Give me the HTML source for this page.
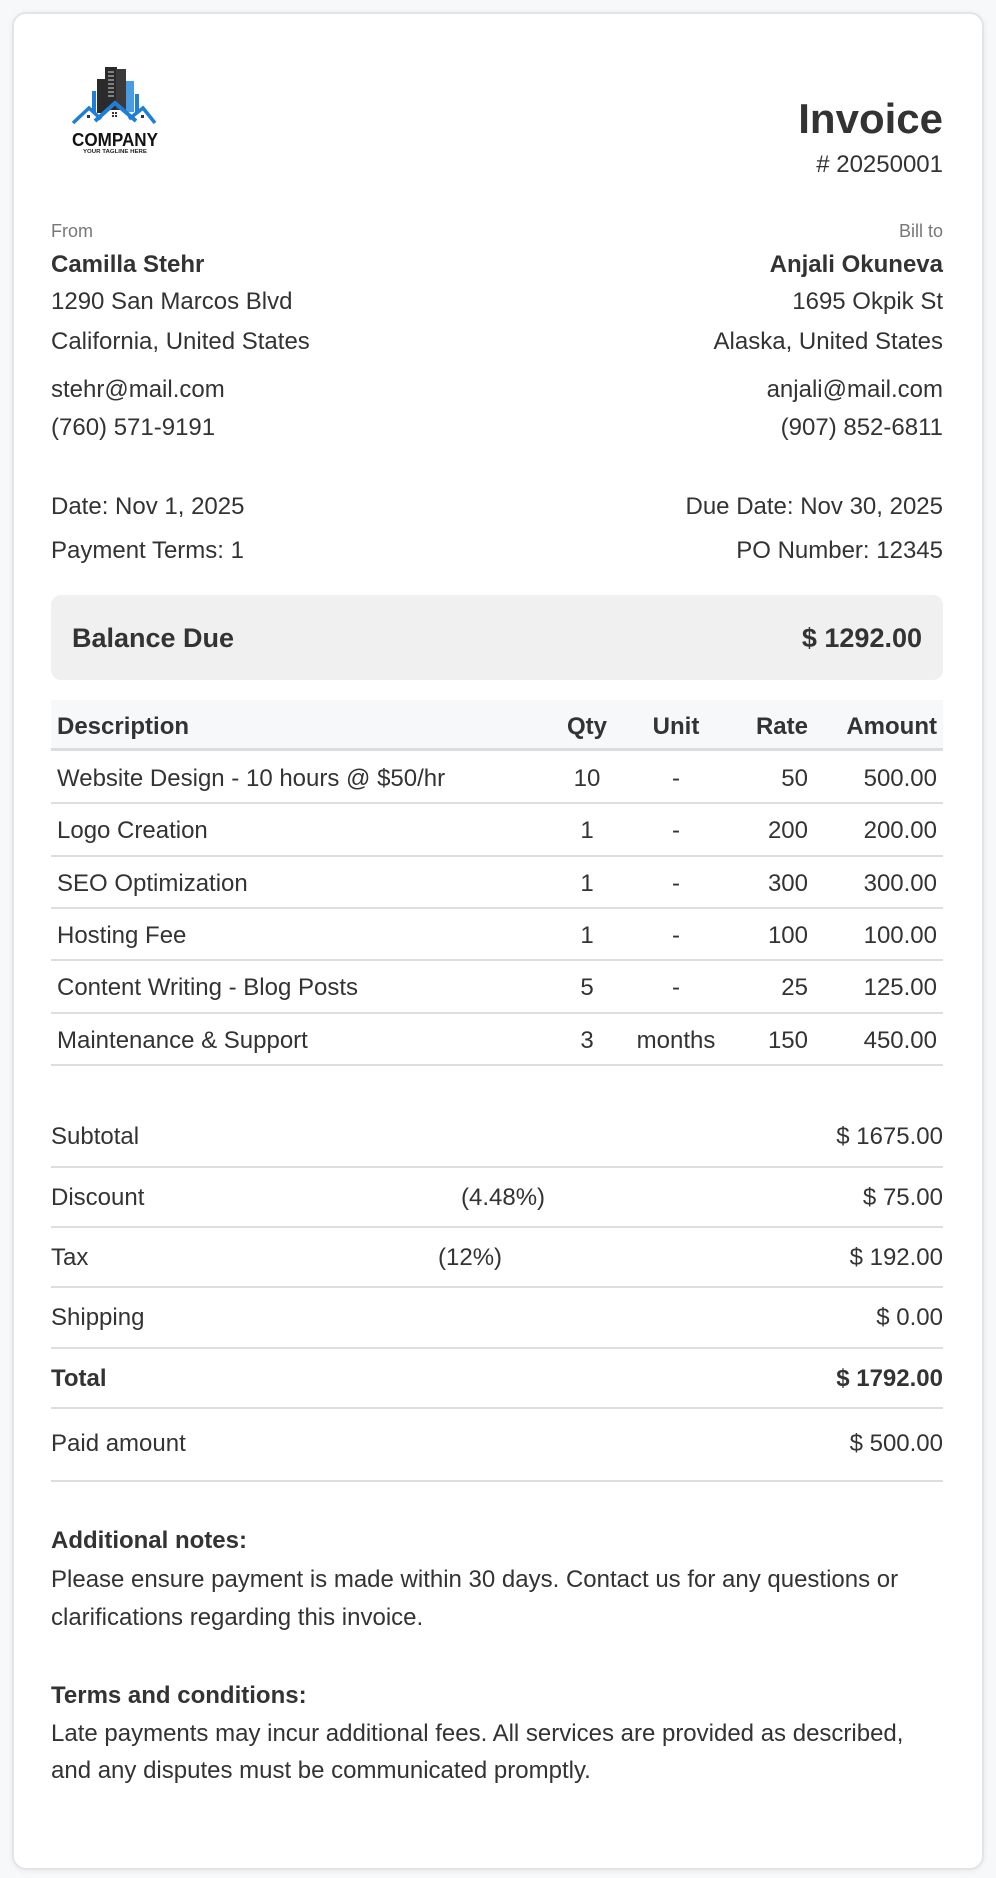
<!DOCTYPE html>
<html><head><meta charset="utf-8"><style>
*{margin:0;padding:0;box-sizing:border-box}
body{width:996px;height:1878px;background:#f7f8f9;font-family:"Liberation Sans",Arial,sans-serif;color:#333;position:relative;overflow:hidden}
.card{position:absolute;left:12px;top:12px;width:972px;height:1858px;background:#fff;border:2px solid #e2e4e7;border-radius:14px;box-shadow:0 1px 6px rgba(0,0,0,.06)}
.t{position:absolute;font-size:24px;line-height:30px;white-space:nowrap;transform:translateY(2px)}
.nb{transform:none}
.l{left:51px}.r{right:53px;text-align:right}
.b{font-weight:bold}
.lab{font-size:18px;color:#777}
.line{position:absolute;left:51px;width:892px;height:2px;background:#dedede}
</style></head><body>
<div class="card"></div>

<svg style="position:absolute;left:50px;top:50px" width="130" height="110" viewBox="0 0 130 110">
  <rect x="42" y="41" width="4" height="22" fill="#1f7ed6"/>
  <rect x="47" y="29" width="9" height="34" fill="#2b2b2b"/>
  <rect x="55" y="17" width="12" height="43" fill="#2b2b2b"/>
  <g stroke="#fff" stroke-width="0.8"><line x1="58" y1="22" x2="64" y2="22"/><line x1="58" y1="26" x2="64" y2="26"/><line x1="58" y1="30" x2="64" y2="30"/><line x1="58" y1="34" x2="64" y2="34"/><line x1="58" y1="38" x2="64" y2="38"/><line x1="58" y1="42" x2="64" y2="42"/><line x1="58" y1="46" x2="64" y2="46"/></g>
  <rect x="66" y="19" width="10" height="41" fill="#3a3a3a"/>
  <rect x="76" y="31" width="8" height="31" fill="#4a9be0"/>
  <rect x="85" y="44" width="4" height="19" fill="#1f7ed6"/>
  <polyline points="23,73 39,58 51,69" fill="none" stroke="#1f7ed6" stroke-width="3.5"/>
  <polyline points="45,71 65,53 86,71" fill="none" stroke="#1f7ed6" stroke-width="4"/>
  <polyline points="79,69 93,58 105,73" fill="none" stroke="#1f7ed6" stroke-width="3.5"/>
  <rect x="62" y="62" width="2" height="2" fill="#333"/><rect x="65" y="62" width="2" height="2" fill="#333"/><rect x="62" y="65" width="2" height="2" fill="#333"/><rect x="65" y="65" width="2" height="2" fill="#333"/>
  <rect x="37" y="65" width="3" height="3" fill="#333"/><rect x="91" y="65" width="3" height="3" fill="#333"/>
  <text x="65" y="96" text-anchor="middle" font-family="Liberation Sans, sans-serif" font-weight="bold" font-size="18" fill="#111" textLength="86" lengthAdjust="spacingAndGlyphs">COMPANY</text>
  <text x="65" y="103" text-anchor="middle" font-family="Liberation Sans, sans-serif" font-weight="bold" font-size="5" fill="#222" textLength="64" lengthAdjust="spacingAndGlyphs">YOUR TAGLINE HERE</text>
</svg>

<div class="t r b" style="top:92px;font-size:42px;line-height:50px">Invoice</div>
<div class="t r" style="top:148px">#&nbsp;20250001</div>

<div class="t l lab" style="top:216px;line-height:26px">From</div>
<div class="t r lab" style="top:216px;line-height:26px">Bill to</div>
<div class="t l b" style="top:248px">Camilla Stehr</div>
<div class="t r b" style="top:248px">Anjali Okuneva</div>
<div class="t l" style="top:285px">1290 San Marcos Blvd</div>
<div class="t r" style="top:285px">1695 Okpik St</div>
<div class="t l" style="top:325px">California, United States</div>
<div class="t r" style="top:325px">Alaska, United States</div>
<div class="t l" style="top:373px">stehr@mail.com</div>
<div class="t r" style="top:373px">anjali@mail.com</div>
<div class="t l" style="top:411px">(760) 571-9191</div>
<div class="t r" style="top:411px">(907) 852-6811</div>

<div class="t l" style="top:490px">Date: Nov 1, 2025</div>
<div class="t r" style="top:490px">Due Date: Nov 30, 2025</div>
<div class="t l" style="top:534px">Payment Terms: 1</div>
<div class="t r" style="top:534px">PO Number: 12345</div>

<div style="position:absolute;left:51px;top:595px;width:892px;height:85px;background:#f0f0f0;border-radius:10px"></div>
<div class="t b nb" style="left:72px;top:622px;font-size:27px;line-height:32px">Balance Due</div>
<div class="t b nb" style="right:74px;top:622px;font-size:27px;line-height:32px">$ 1292.00</div>

<div style="position:absolute;left:51px;top:700px;width:892px;height:51px;background:#f7f8fa;border-bottom:3px solid #dcdcdc"></div>
<div class="t b" style="left:57px;top:710px">Description</div>
<div class="t b" style="left:547px;width:80px;text-align:center;top:710px">Qty</div>
<div class="t b" style="left:636px;width:80px;text-align:center;top:710px">Unit</div>
<div class="t b" style="right:188px;top:710px">Rate</div>
<div class="t b" style="right:59px;top:710px">Amount</div>

<div style="position:absolute;left:0;top:751px">
<div class="t" style="left:57px;top:11px">Website Design - 10 hours @ $50/hr</div>
<div class="t" style="left:547px;width:80px;text-align:center;top:11px">10</div>
<div class="t" style="left:636px;width:80px;text-align:center;top:11px">-</div>
<div class="t" style="left:708px;width:100px;text-align:right;top:11px">50</div>
<div class="t" style="left:837px;width:100px;text-align:right;top:11px">500.00</div>
</div>
<div class="line" style="top:802px"></div>
<div style="position:absolute;left:0;top:803px">
<div class="t" style="left:57px;top:11px">Logo Creation</div>
<div class="t" style="left:547px;width:80px;text-align:center;top:11px">1</div>
<div class="t" style="left:636px;width:80px;text-align:center;top:11px">-</div>
<div class="t" style="left:708px;width:100px;text-align:right;top:11px">200</div>
<div class="t" style="left:837px;width:100px;text-align:right;top:11px">200.00</div>
</div>
<div class="line" style="top:855px"></div>
<div style="position:absolute;left:0;top:856px">
<div class="t" style="left:57px;top:11px">SEO Optimization</div>
<div class="t" style="left:547px;width:80px;text-align:center;top:11px">1</div>
<div class="t" style="left:636px;width:80px;text-align:center;top:11px">-</div>
<div class="t" style="left:708px;width:100px;text-align:right;top:11px">300</div>
<div class="t" style="left:837px;width:100px;text-align:right;top:11px">300.00</div>
</div>
<div class="line" style="top:907px"></div>
<div style="position:absolute;left:0;top:908px">
<div class="t" style="left:57px;top:11px">Hosting Fee</div>
<div class="t" style="left:547px;width:80px;text-align:center;top:11px">1</div>
<div class="t" style="left:636px;width:80px;text-align:center;top:11px">-</div>
<div class="t" style="left:708px;width:100px;text-align:right;top:11px">100</div>
<div class="t" style="left:837px;width:100px;text-align:right;top:11px">100.00</div>
</div>
<div class="line" style="top:959px"></div>
<div style="position:absolute;left:0;top:960px">
<div class="t" style="left:57px;top:11px">Content Writing - Blog Posts</div>
<div class="t" style="left:547px;width:80px;text-align:center;top:11px">5</div>
<div class="t" style="left:636px;width:80px;text-align:center;top:11px">-</div>
<div class="t" style="left:708px;width:100px;text-align:right;top:11px">25</div>
<div class="t" style="left:837px;width:100px;text-align:right;top:11px">125.00</div>
</div>
<div class="line" style="top:1012px"></div>
<div style="position:absolute;left:0;top:1013px">
<div class="t" style="left:57px;top:11px">Maintenance &amp; Support</div>
<div class="t" style="left:547px;width:80px;text-align:center;top:11px">3</div>
<div class="t" style="left:636px;width:80px;text-align:center;top:11px">months</div>
<div class="t" style="left:708px;width:100px;text-align:right;top:11px">150</div>
<div class="t" style="left:837px;width:100px;text-align:right;top:11px">450.00</div>
</div>
<div class="line" style="top:1064px"></div>

<div class="t l" style="top:1120px">Subtotal</div>
<div class="t r" style="top:1120px">$ 1675.00</div>
<div class="line" style="top:1166px"></div>
<div class="t l" style="top:1181px">Discount</div>
<div class="t" style="left:461px;top:1181px">(4.48%)</div>
<div class="t r" style="top:1181px">$ 75.00</div>
<div class="line" style="top:1226px"></div>
<div class="t l" style="top:1241px">Tax</div>
<div class="t" style="left:438px;top:1241px">(12%)</div>
<div class="t r" style="top:1241px">$ 192.00</div>
<div class="line" style="top:1286px"></div>
<div class="t l" style="top:1301px">Shipping</div>
<div class="t r" style="top:1301px">$ 0.00</div>
<div class="line" style="top:1347px"></div>
<div class="t l b" style="top:1362px">Total</div>
<div class="t r b" style="top:1362px">$ 1792.00</div>
<div class="line" style="top:1407px"></div>
<div class="t l" style="top:1427px">Paid amount</div>
<div class="t r" style="top:1427px">$ 500.00</div>
<div class="line" style="top:1480px"></div>

<div class="t l b" style="top:1524px">Additional notes:</div>
<div class="t l" style="top:1563px">Please ensure payment is made within 30 days. Contact us for any questions or</div>
<div class="t l" style="top:1601px">clarifications regarding this invoice.</div>
<div class="t l b" style="top:1679px">Terms and conditions:</div>
<div class="t l" style="top:1717px">Late payments may incur additional fees. All services are provided as described,</div>
<div class="t l" style="top:1754px">and any disputes must be communicated promptly.</div>
</body></html>
